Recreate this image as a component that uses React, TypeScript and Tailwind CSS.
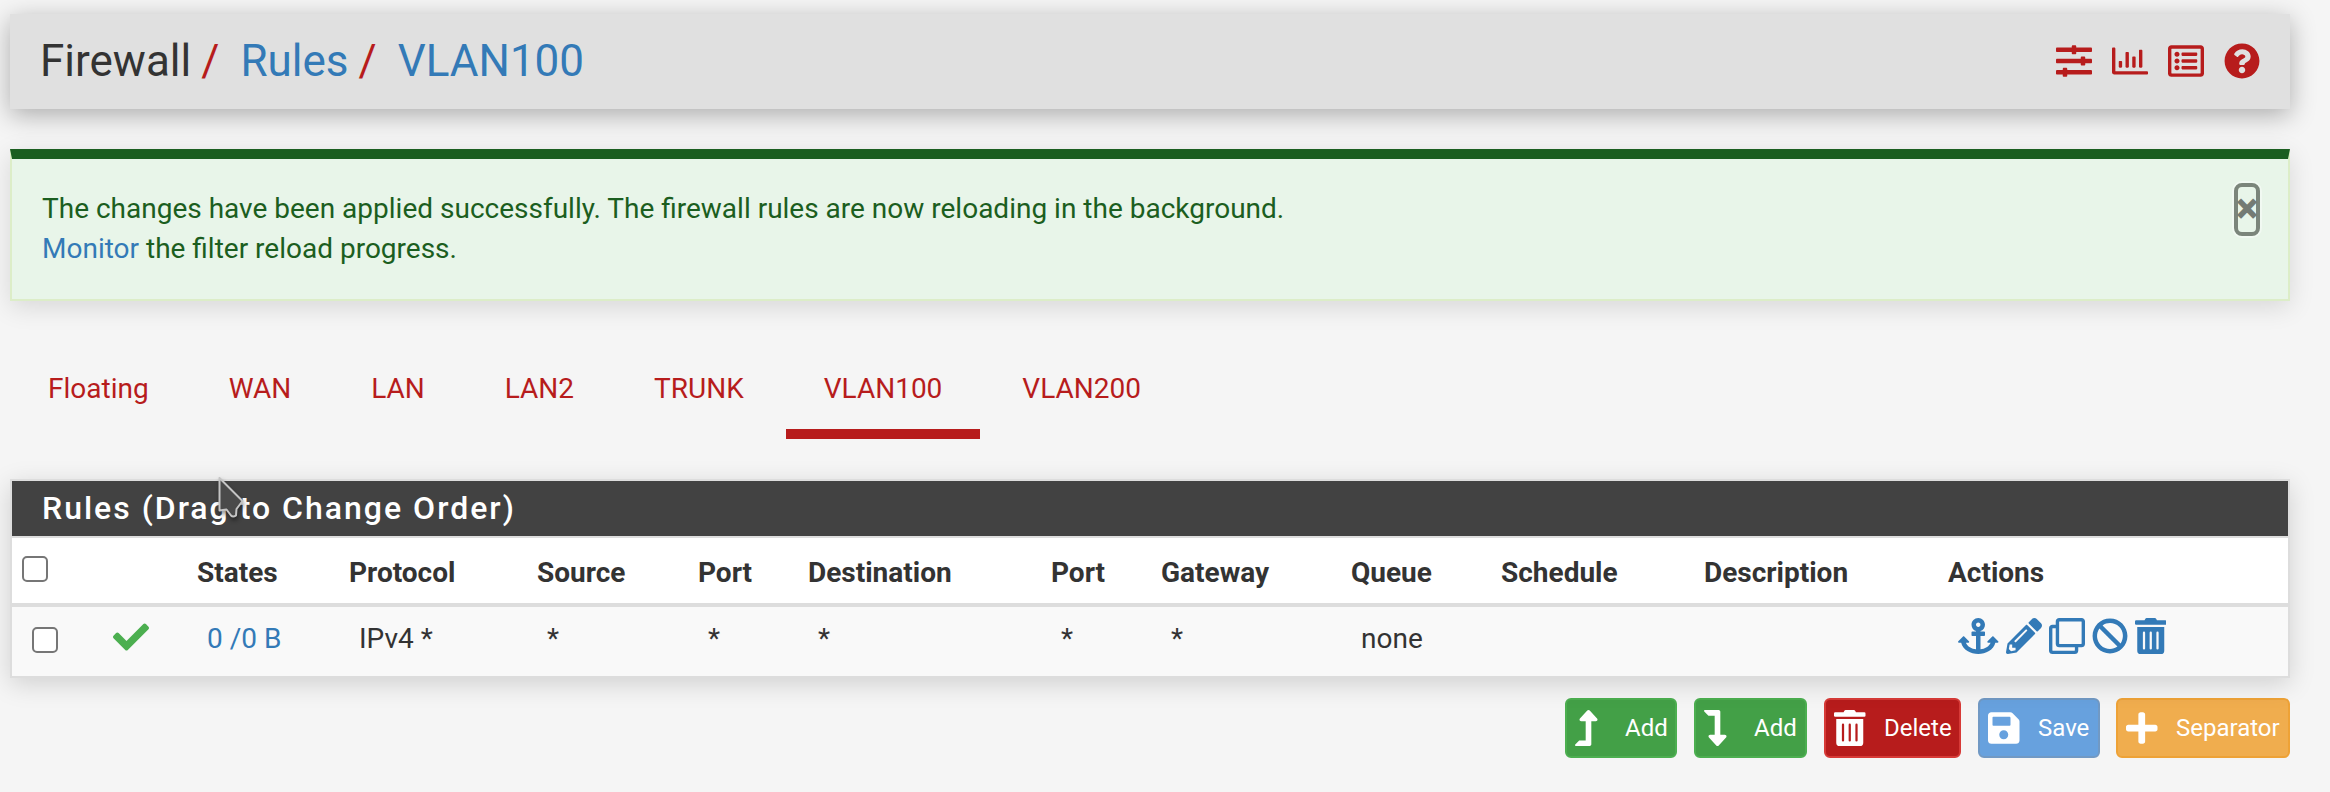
import React from "react";
import {
  FaSlidersH, FaRegChartBar, FaRegListAlt, FaQuestionCircle, FaCheck, FaAnchor, FaPencilAlt,
  FaRegClone, FaBan, FaTrashAlt, FaLevelUpAlt, FaLevelDownAlt, FaSave, FaPlus,
} from "react-icons/fa";

const tabs = ["Floating", "WAN", "LAN", "LAN2", "TRUNK", "VLAN100", "VLAN200"];
const headings = ["States", "Protocol", "Source", "Port", "Destination", "Port", "Gateway", "Queue", "Schedule", "Description", "Actions"];
const cells = ["0 /0 B", "IPv4 *", "*", "*", "*", "*", "*", "none", "", ""];
const columns = "grid grid-cols-[80px_95px_152px_188px_161px_110px_243px_110px_190px_150px_203px_244px_1fr]";

const buttons = [
  { label: "Add", icon: FaLevelUpAlt, size: "h-9 w-[22.5px]", style: "w-28 mr-[17px] bg-[#43a047] border-[#4caf50]" },
  { label: "Add", icon: FaLevelDownAlt, size: "h-9 w-[22.5px]", style: "w-[113px] mr-[17px] bg-[#43a047] border-[#4caf50]" },
  { label: "Delete", icon: FaTrashAlt, size: "h-9 w-[31.5px]", style: "w-[137px] mr-[17px] bg-[#b71c1c] border-[#d73a37]" },
  { label: "Save", icon: FaSave, size: "h-9 w-[31.5px]", style: "w-[122px] mr-4 bg-[#67a1de] border-[#7199c4]" },
  { label: "Separator", icon: FaPlus, size: "h-9 w-[31.5px]", style: "w-[174px] bg-[#f0ad4e] border-[#eea236]" },
];

function Checkbox() {
  return <input type="checkbox" className="block size-[26px] appearance-none rounded-[5px] border-2 border-[#767676] bg-white" />;
}

function Pointer() {
  return (
    <svg className="absolute left-[206px] -top-[5px] drop-shadow-[1px_3px_2px_rgba(0,0,0,0.4)]" width="32" height="46" viewBox="0 0 32 46">
      <path d="M1.500 2V34.500L8.500 33.500L13 39.500Q15 41.500 18 39.500L18.500 33L24.500 25Z" fill="#4a4a4a" stroke="#c4c4c4" strokeWidth="2" strokeLinejoin="round" />
    </svg>
  );
}

export default function App() {
  return (
    <div className="h-[792px] overflow-hidden bg-[#f5f5f5] pt-3.5 pr-10 pl-2.5 font-[Roboto,sans-serif] text-[28px] leading-[40px] text-[#333]">
      <header className="flex h-[95px] items-center justify-between bg-[#e0e0e0] pr-[30px] pl-[30px] shadow-[0_6px_24px_rgba(0,0,0,0.3)]">
        <h1 className="-mt-px flex text-[44px] leading-[48px] text-[#333]">
          <span>Firewall</span>
          <span className="ml-2.5 text-[#b71c1c]">/</span>
          <a className="ml-[21px] text-[#337ab7]">Rules</a>
          <span className="ml-2.5 text-[#b71c1c]">/</span>
          <a className="ml-[21px] text-[#337ab7]">VLAN100</a>
        </h1>
        <div className="-mt-px flex gap-5 text-[36px] text-[#b71c1c]">
          <FaSlidersH /><FaRegChartBar /><FaRegListAlt /><FaQuestionCircle />
        </div>
      </header>

      <div className="mt-10 flex h-[152px] justify-between border-2 border-t-[10px] border-[#dcedc8] border-t-[#1b5e20] bg-[#e8f5e9] pt-[30px] pr-[30px] pl-[30px] text-[#1b5e20] shadow-[0_6px_24px_rgba(0,0,0,0.12)]">
        <p>
          The changes have been applied successfully. The firewall rules are now reloading in the background.<br />
          <a className="text-[#337ab7]">Monitor</a> the filter reload progress.
        </p>
        <button className="-mt-1.5 -mr-0.5 flex h-[53px] w-[26px] items-center justify-center rounded-lg border-4 border-[#7b857b] pb-0.5 text-[42px] leading-none font-black text-[#747b74] shadow-[0_0_0_2px_rgba(255,255,255,0.4)]">
          ×
        </button>
      </div>

      <nav className="mt-[58px] flex h-20 gap-1 text-[#b71c1c]">
        {tabs.map((tab) => (
          <a key={tab} className={tab === "VLAN100" ? "border-b-[10px] border-[#b71c1c] px-[38px] pt-2.5" : "px-[38px] pt-2.5"}>
            {tab}
          </a>
        ))}
      </nav>

      <section className="relative mt-10 h-[199px] border-2 border-[#ddd] bg-[#f9f9f9] shadow-[0_6px_24px_rgba(0,0,0,0.15)]">
        <h2 className="h-[55px] bg-[#424242] pt-[7px] pl-[30px] text-[32px] leading-[40px] font-medium tracking-[2px] text-white">
          Rules (Drag to Change Order)
        </h2>
        <Pointer />
        <div className={`${columns} h-[71px] border-t-2 border-b-4 border-[#ddd] bg-white font-bold`}>
          <div className="pt-[18px] pl-2.5"><Checkbox /></div>
          <div />
          {headings.map((heading, i) => <div key={i} className="pt-[15px] pl-2.5">{heading}</div>)}
        </div>
        <div className={`${columns} h-[69px]`}>
          <div className="pt-5 pl-5"><Checkbox /></div>
          <div className="pt-3 pl-[21px] text-[36px] text-[#4caf50]"><FaCheck /></div>
          {cells.map((cell, i) => (
            <div key={i} className={i === 0 ? "pt-3 pl-5 text-[#337ab7]" : "pt-3 pl-5"}>{cell}</div>
          ))}
          <div className="flex gap-[7px] pt-[11px] pl-5 text-[#337ab7]">
            <FaAnchor className="h-9 w-[40.5px]" />
            <FaPencilAlt className="h-9 w-9" />
            <FaRegClone className="h-9 w-9" />
            <FaBan className="h-9 w-9" />
            <FaTrashAlt className="h-9 w-[31.5px]" />
          </div>
        </div>
      </section>

      <div className="mt-5 flex justify-end">
        {buttons.map(({ label, icon: Icon, size, style }, i) => (
          <button key={i} className={`flex h-[60px] items-center rounded-md border-2 pl-2 text-[24px] text-white ${style}`}>
            <span className="flex w-[50px] shrink-0"><Icon className={size} /></span>
            {label}
          </button>
        ))}
      </div>
    </div>
  );
}
